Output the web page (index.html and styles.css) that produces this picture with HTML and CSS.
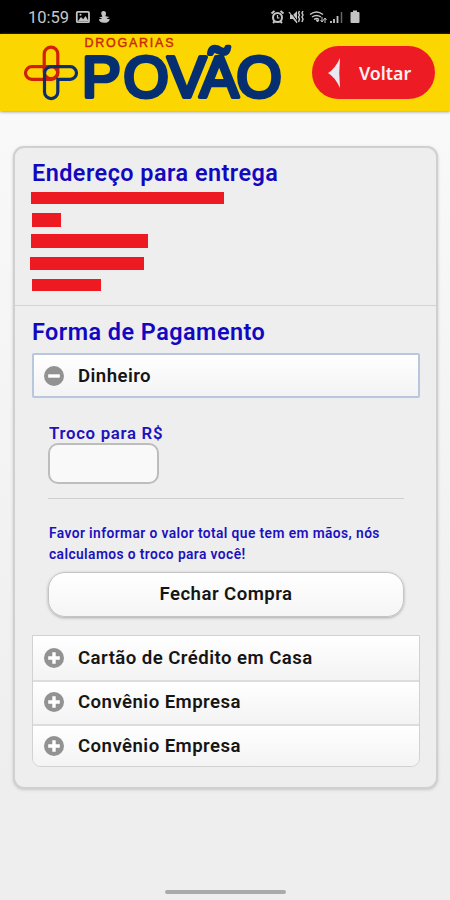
FILE: index.html
```html
<!DOCTYPE html>
<html lang="pt-BR">
<head>
<meta charset="utf-8">
<title>Drogarias Povão</title>
<link rel="stylesheet" href="styles.css">
</head>
<body>
<div class="status">
  <span class="time">10:59</span>
  <svg class="notices" width="38" height="16" viewBox="0 0 38 16">
    <rect x="1.8" y="2.8" width="12.2" height="10.4" rx="1" fill="none" stroke="#c4c4c4" stroke-width="1.8"/>
    <path d="M3 12l3-4 2.2 2.3L10.500 7l3 5z" fill="#c4c4c4"/><circle cx="5.500" cy="5.800" r="1" fill="#c4c4c4"/>
    <path d="M28.500 2a2.500 2.500 0 0 1 2.500 2.600c0 1.100-.6 1.500-.4 2.700l3.900.7c-1.500.6-2.200 1-2.800 1.800l3.200.4c-.7 2.700-3 3.800-5.900 3.600-3.200-.2-5-1.400-5-3.600l3.300-.4-3.300-1.500 3.300-.5c0-1.200-1-1.900-1-3.200A2.300 2.300 0 0 1 28.500 2z" fill="#c4c4c4"/>
  </svg>
  <svg class="system" width="90" height="16" viewBox="0 0 90 16" fill="none" stroke="#c4c4c4">
    <circle cx="7.500" cy="8.500" r="4.500" stroke-width="2"/>
    <path d="M1.500 4.500l3-2.500M13.500 4.500l-3-2.500M3 14l2-2M12 14l-2-2" stroke-width="2"/>
    <path d="M7.500 6v3h2" stroke-width="1.200"/>
    <path d="M20 6h3l4-4v12l-4-4h-3z" fill="#c4c4c4" stroke="none"/>
    <path d="M20 2l8 11" stroke="#000"/>
    <path d="M19 3l8 11" stroke-width="1.200"/>
    <path d="M29.500 2l-1 2 1 2-1 2 1 2-1 3M33 2l-1 2 1 2-1 2 1 2-1 3" stroke-width="1.500"/>
    <path d="M40 5.500q6.500-5 13 0M42 8q4.500-3 9 0M44 10.500q2.500-2 5 0" stroke-width="1.500"/>
    <path d="M46 10.500l1.500 2.500 1.500-2" fill="#c4c4c4"/>
    <path d="M52 8v5M50.500 11l1.500 2 1.500-2M55 14V9M53.500 11L55 9l1.500 2" stroke-width="1"/>
    <path d="M61 14v-2M64 14v-4M67.500 14V7" stroke-width="1.800"/><path d="M71.500 14V3" stroke="#666" stroke-width="1.500"/>
    <path d="M80.500 4a1 1 0 0 1 1-1H83V1.500h4V3h1.500a1 1 0 0 1 1 1v9a1 1 0 0 1-1 1h-7a1 1 0 0 1-1-1z" fill="#c4c4c4" stroke="none"/>
  </svg>
</div>
<header class="header">
  <svg class="logo" width="264" height="76" viewBox="22 34 264 76">
    <rect x="44.200" y="47.200" width="13.600" height="31.500" rx="6.800" class="mark-red"/>
    <rect x="25.500" y="66.700" width="32.300" height="12.600" rx="6.300" class="mark-red"/>
    <path d="M44.500 79.300V73.500a6.800 6.800 0 0 1 6.800-6.800H70.200a6.300 6.300 0 0 1 0 12.600H57.800V92a6.650 6.650 0 0 1-13.300 0z" class="mark-blue"/>
    <text x="84.500" y="47.200" class="brand-small" textLength="89">DROGARIAS</text>
    <text x="82 123.600 167.500 199.700 236.400" y="96.700" class="brand">POVÃO</text>
  </svg>
  <button class="back">
    <svg width="14" height="32" viewBox="0 0 14 32"><path d="M13 1Q11.500 16 13 31Q8 20 1 16Q8 12 13 1z" fill="#e9e9f2"/></svg>
    <span>Voltar</span>
  </button>
</header>
<main class="card">
  <section class="address">
    <h2>Endereço para entrega</h2>
    <div class="bar bar-a"></div>
    <div class="bar bar-b"></div>
    <div class="bar bar-c"></div>
    <div class="bar bar-d"></div>
    <div class="bar bar-e"></div>
  </section>
  <section class="payment">
    <h2>Forma de Pagamento</h2>
    <div class="row open">
      <svg class="ic" viewBox="0 0 20 20"><circle cx="10" cy="10" r="10"/><path d="M4.200 10h11.600"/></svg>
      <span>Dinheiro</span>
    </div>
    <div class="panel">
      <label class="label" for="change">Troco para R$</label>
      <input class="input" id="change" type="text">
      <hr class="rule">
      <p class="note">Favor informar o valor total que tem em mãos, nós<br>calculamos o troco para você!</p>
      <button class="submit">Fechar Compra</button>
    </div>
    <div class="list">
      <div class="row"><svg class="ic" viewBox="0 0 20 20"><circle cx="10" cy="10" r="10"/><path d="M4.200 10h11.600M10 4.200v11.600"/></svg><span>Cartão de Crédito em Casa</span></div>
      <div class="row"><svg class="ic" viewBox="0 0 20 20"><circle cx="10" cy="10" r="10"/><path d="M4.200 10h11.600M10 4.200v11.600"/></svg><span>Convênio Empresa</span></div>
      <div class="row"><svg class="ic" viewBox="0 0 20 20"><circle cx="10" cy="10" r="10"/><path d="M4.200 10h11.600M10 4.200v11.600"/></svg><span>Convênio Empresa</span></div>
    </div>
  </section>
</main>
<footer class="nav"><div class="handle"></div></footer>
</body>
</html>
```
FILE: styles.css
```css
* { box-sizing: border-box; }
body {
  margin: 0;
  width: 450px;
  height: 900px;
  display: flex;
  flex-direction: column;
  overflow: hidden;
  background: linear-gradient(#f9f9f9 110px, #eeeeee 790px);
  font-family: Roboto, "Liberation Sans", sans-serif;
  color: #151515;
}
.status {
  flex: none;
  height: 34px;
  background: #000;
  display: flex;
  align-items: center;
  padding: 0 90px 0 28px;
}
.time { color: #c8c8c8; font-size: 16.5px; width: 47px; }
.system { margin-left: auto; }
.header {
  flex: none;
  height: 77px;
  background: #fbd600;
  box-shadow: 0 1px 3px #999;
  display: flex;
  align-items: flex-start;
  padding: 0 15px 0 22px;
  justify-content: space-between;
}
.mark-red, .mark-blue { fill: none; stroke: #d02008; stroke-width: 3.2; }
.mark-blue { stroke: #0b2f6c; }
.brand-small { font: 12.5px "Liberation Sans", sans-serif; fill: #c62808; stroke: #c62808; stroke-width: .4; }
.brand { font: 58px "Liberation Sans", sans-serif; fill: #052f70; stroke: #052f70; stroke-width: 4.2; stroke-linejoin: round; }
.back {
  width: 123px;
  height: 53px;
  margin-top: 12px;
  padding: 0 0 0 15px;
  border: 0;
  border-radius: 27px;
  background: #ed1c24;
  color: #fff1f1;
  font: 600 17.8px "Noto Sans", sans-serif;
  display: flex;
  align-items: center;
  gap: 18px;
}
.card {
  flex: none;
  width: 425px;
  height: 643px;
  margin: 35px 0 0 13px;
  border: 2px solid #d0d0d0;
  border-radius: 11px;
  background: #eee;
  box-shadow: 0 1px 3px #c8c8c8;
}
h2 { margin: 0; padding-top: 1px; height: 26px; font-size: 23.4px; line-height: 26px; font-weight: 600; color: #1208c0; white-space: nowrap; letter-spacing: .48px; }
.address { height: 158px; padding: 11px 17px 0; border-bottom: 1px solid #d4d4d4; }
.bar { background: #ee1a22; }
.bar-a { width: 193px; height: 12px; margin: 7px 0 0 -1px; }
.bar-b { width: 29px; height: 14px; margin-top: 9px; }
.bar-c { width: 117px; height: 14px; margin: 7px 0 0 -1px; }
.bar-d { width: 114px; height: 13px; margin: 9px 0 0 -2px; }
.bar-e { width: 69px; height: 12px; margin-top: 9px; }
.payment { padding: 12px 17px 0; }
.row {
  height: 44px;
  display: flex;
  align-items: center;
  gap: 14px;
  padding: 0 0 1px 11px;
  background: linear-gradient(#fff, #f3f3f3);
  font-size: 18.6px;
  font-weight: 600;
  letter-spacing: .45px;
  white-space: nowrap;
}
.ic { width: 20px; height: 20px; flex: none; fill: #929292; }
.ic path { stroke: #fff; stroke-width: 3.4; }
.open { height: 45px; margin-top: 9px; border: 2px solid #b8c7dc; padding: 0 0 0 10px; width: 388px; border-radius: 2px; }
.panel { padding: 25px 16px 0; }
.label { display: block; font-size: 16.8px; line-height: 20px; font-weight: 600; color: #1c12c0; letter-spacing: .7px; padding-left: 1px; }
.input { display: block; width: 111px; height: 41px; margin: 0; border: 2px solid #bdbdbd; border-radius: 10px; background: #f9f9f9; }
.rule { margin: 14px 0 0; border: 0; height: 1px; background: #cecece; width: 356px; }
.note { margin: 24px 0 0; padding-left: 1px; font-size: 13.8px; line-height: 21px; font-weight: 600; color: #1c12c0; white-space: nowrap; letter-spacing: .4px; }
.submit {
  display: block;
  width: 356px;
  height: 45px;
  margin-top: 7px;
  padding: 0 0 1px;
  border: 1px solid #c4c4c4;
  border-radius: 17px;
  background: linear-gradient(#fff, #f5f5f5);
  box-shadow: 0 1px 3px #aaa;
  font: 600 18.6px Roboto, sans-serif;
  letter-spacing: .45px;
  color: #151515;
}
.list { width: 388px; height: 132px; margin-top: 18px; border: 1px solid #d2d2d2; border-radius: 0 0 9px 9px; overflow: hidden; }
.list .row + .row { border-top: 2px solid #ddd; padding-bottom: 3px; }
.nav { margin-top: auto; height: 12px; display: flex; justify-content: center; }
.handle { width: 121px; height: 4px; margin-top: 2px; border-radius: 2px; background: #aaa; }
```
